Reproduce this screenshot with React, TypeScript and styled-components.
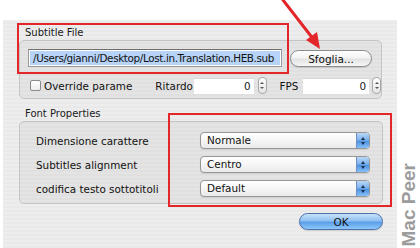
import React from "react";
import styled, { createGlobalStyle } from "styled-components";

const Global = createGlobalStyle`
  html, body { margin: 0; padding: 0; background: #ffffff; }
  body { font-family: "DejaVu Sans", "Noto Sans", sans-serif; color: #111; }
`;

const Page = styled.div`
  position: relative;
  width: 420px;
  height: 248px;
  overflow: hidden;
  background: #ffffff;
  display: flex;
  flex-direction: column;
`;

const TopStrip = styled.div`
  height: 20px;
  flex: none;
`;

const Body = styled.div`
  display: flex;
  flex: 1;
  padding-left: 3px;
`;

const Dialog = styled.div`
  width: 394px;
  background: repeating-linear-gradient(
    to bottom,
    #ededed 0px,
    #ededed 2px,
    #e9e9e9 2px,
    #e9e9e9 4px
  );
  padding: 6px 15px 0 16px;
  box-sizing: border-box;
  display: flex;
  flex-direction: column;
`;

const Side = styled.div`
  flex: 1;
  display: flex;
  align-items: flex-end;
  justify-content: center;
  padding-bottom: 2px;
`;

const Watermark = styled.div`
  writing-mode: vertical-rl;
  transform: rotate(180deg);
  font-family: "Liberation Sans", Arial, sans-serif;
  font-weight: bold;
  font-size: 19px;
  color: #9c9c9c;
  line-height: 17px;
  white-space: nowrap;
`;

const GroupTitle = styled.div`
  font-size: 10px;
  height: 14px;
  line-height: 14px;
  padding-left: 6px;
  color: #1a1a1a;
`;

const GroupBox = styled.div<{ $h: number }>`
  height: ${(p) => p.$h}px;
  box-sizing: border-box;
  border: 1px solid #c4c4c4;
  border-radius: 5px;
  background: rgba(0, 0, 0, 0.035);
`;

const Group1 = styled(GroupBox)`
  width: 363px;
  padding: 7px 0 0 8px;
  display: flex;
  flex-direction: column;
  gap: 10px;
`;

const Group2 = styled(GroupBox)`
  width: 364px;
  padding: 10px 0 0 16px;
  display: flex;
  flex-direction: column;
  gap: 7px;
`;

const Row = styled.div`
  display: flex;
  align-items: center;
`;

const PathField = styled.div`
  width: 254px;
  height: 18px;
  box-sizing: border-box;
  border: 1px solid #9a9a9a;
  border-top-color: #6e6e6e;
  background: #ffffff;
  padding: 1px;
  display: flex;
`;

const Selection = styled.div`
  flex: 1;
  background: #b7d3f7;
  font-size: 10.4px;
  letter-spacing: -0.36px;
  line-height: 14px;
  padding-left: 3px;
  white-space: nowrap;
  overflow: hidden;
  color: #111;
`;

const PillButton = styled.div<{ $w: number; $blue?: boolean }>`
  width: ${(p) => p.$w}px;
  height: 17px;
  box-sizing: border-box;
  border-radius: 9px;
  border: 1px solid ${(p) => (p.$blue ? "#4c6fa8" : "#8c8c8c")};
  background: ${(p) =>
    p.$blue
      ? "linear-gradient(to bottom, #c9e2fb 0%, #8fc0f2 45%, #5b9ee8 55%, #8cc8fb 100%)"
      : "linear-gradient(to bottom, #ffffff 0%, #f3f3f3 45%, #e2e2e2 55%, #f7f7f7 100%)"};
  display: flex;
  align-items: center;
  justify-content: center;
  font-size: 10.5px;
  color: #111;
  box-shadow: 0 1px 1px rgba(0, 0, 0, 0.12);
`;

const Checkbox = styled.div`
  width: 11px;
  height: 11px;
  box-sizing: border-box;
  border: 1px solid #8a8a8a;
  border-radius: 2px;
  background: linear-gradient(to bottom, #ffffff, #ececec);
  margin-left: 2px;
`;

const Label = styled.span<{ $w?: number; $ml?: number }>`
  font-size: 10.4px;
  color: #111;
  white-space: nowrap;
  width: ${(p) => (p.$w ? `${p.$w}px` : "auto")};
  margin-left: ${(p) => p.$ml ?? 0}px;
`;

const NumField = styled.div<{ $w: number; $ml: number }>`
  width: ${(p) => p.$w}px;
  margin-left: ${(p) => p.$ml}px;
  height: 16px;
  box-sizing: border-box;
  background: #ffffff;
  border-top: 1px solid #d6d6d6;
  font-size: 10.4px;
  display: flex;
  align-items: center;
  justify-content: flex-end;
  padding-right: 3px;
  color: #222;
`;

const Stepper = styled.div<{ $ml: number }>`
  width: 9px;
  height: 17px;
  box-sizing: border-box;
  margin-left: ${(p) => p.$ml}px;
  border: 1px solid #a8a8a8;
  border-radius: 4px;
  background: linear-gradient(to bottom, #ffffff, #e4e4e4);
  display: flex;
  flex-direction: column;
  align-items: center;
  justify-content: center;
  gap: 3px;
`;

const TriUp = styled.div`
  width: 0;
  height: 0;
  border-left: 2px solid transparent;
  border-right: 2px solid transparent;
  border-bottom: 2px solid #555;
`;

const TriDown = styled.div`
  width: 0;
  height: 0;
  border-left: 2px solid transparent;
  border-right: 2px solid transparent;
  border-top: 2px solid #555;
`;

const Popup = styled.div`
  width: 170px;
  height: 17px;
  box-sizing: border-box;
  border: 1px solid #969696;
  border-radius: 4px;
  background: linear-gradient(to bottom, #ffffff 0%, #f6f6f6 50%, #e9e9e9 100%);
  display: flex;
  overflow: hidden;
  box-shadow: 0 1px 1px rgba(0, 0, 0, 0.1);
`;

const PopupText = styled.div`
  flex: 1;
  font-size: 10.4px;
  line-height: 15px;
  padding-left: 6px;
  color: #111;
`;

const PopupArrows = styled.div`
  width: 12px;
  border-left: 1px solid #6d8fc4;
  background: linear-gradient(to bottom, #b9d8f8 0%, #7fb2ec 45%, #4e92e3 55%, #86c0f5 100%);
  display: flex;
  flex-direction: column;
  align-items: center;
  justify-content: center;
  gap: 2px;
`;

const PopTriUp = styled(TriUp)`
  border-left-width: 2.5px;
  border-right-width: 2.5px;
  border-bottom: 3px solid #1e2f4a;
`;

const PopTriDown = styled(TriDown)`
  border-left-width: 2.5px;
  border-right-width: 2.5px;
  border-top: 3px solid #1e2f4a;
`;

const Footer = styled.div`
  display: flex;
  justify-content: flex-end;
  padding-top: 9px;
  width: 364px;
`;

const Spacer = styled.div<{ $h: number }>`
  height: ${(p) => p.$h}px;
  flex: none;
`;

const RedBox = styled.div<{ $x: number; $y: number; $w: number; $h: number }>`
  position: absolute;
  left: ${(p) => p.$x}px;
  top: ${(p) => p.$y}px;
  width: ${(p) => p.$w}px;
  height: ${(p) => p.$h}px;
  box-sizing: border-box;
  border: 2px solid #e3262a;
  pointer-events: none;
`;

const ArrowSvg = styled.svg`
  position: absolute;
  left: 270px;
  top: 0;
  pointer-events: none;
`;

const rows = [
  { label: "Dimensione carattere", value: "Normale" },
  { label: "Subtitles alignment", value: "Centro" },
  { label: "codifica testo sottotitoli", value: "Default" },
];

export default function App() {
  return (
    <>
      <Global />
      <Page>
        <TopStrip />
        <Body>
          <Dialog>
            <GroupTitle>Subtitle File</GroupTitle>
            <Group1 $h={59}>
              <Row>
                <PathField>
                  <Selection>/Users/gianni/Desktop/Lost.in.Translation.HEB.sub</Selection>
                </PathField>
                <PillButton $w={82} style={{ marginLeft: 8, marginTop: 2 }}>
                  Sfoglia...
                </PillButton>
              </Row>
              <Row>
                <Checkbox />
                <Label $ml={3} $w={112}>Override parame</Label>
                <Label>Ritardo</Label>
                <NumField $w={60} $ml={1}>0</NumField>
                <Stepper $ml={4}>
                  <TriUp />
                  <TriDown />
                </Stepper>
                <Label $ml={13}>FPS</Label>
                <NumField $w={66} $ml={5}>0</NumField>
                <Stepper $ml={3}>
                  <TriUp />
                  <TriDown />
                </Stepper>
              </Row>
            </Group1>
            <Spacer $h={8} />
            <GroupTitle>Font Properties</GroupTitle>
            <Group2 $h={83}>
              {rows.map((r) => (
                <Row key={r.label}>
                  <Label $w={164}>{r.label}</Label>
                  <Popup>
                    <PopupText>{r.value}</PopupText>
                    <PopupArrows>
                      <PopTriUp />
                      <PopTriDown />
                    </PopupArrows>
                  </Popup>
                </Row>
              ))}
            </Group2>
            <Footer>
              <PillButton $w={84} $blue>
                OK
              </PillButton>
            </Footer>
          </Dialog>
          <Side>
            <Watermark>Mac Peer</Watermark>
          </Side>
        </Body>
        <RedBox $x={17} $y={23} $w={272} $h={51} />
        <RedBox $x={168} $y={113} $w={224} $h={94} />
        <ArrowSvg width="60" height="52" viewBox="0 0 60 52">
          <line x1="13" y1="0" x2="44" y2="40" stroke="#e3262a" strokeWidth="3" strokeLinecap="round" />
          <polygon points="50,49 36,40 47,32" fill="#e3262a" />
        </ArrowSvg>
      </Page>
    </>
  );
}
